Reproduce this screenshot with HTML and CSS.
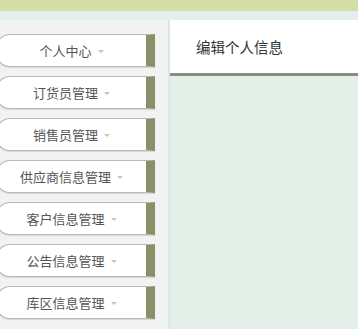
FILE: index.html
```html
<!DOCTYPE html>
<html>
  <head>
    <title>编辑个人信息</title>
    <link rel="stylesheet" href="styles.css">
  </head>
  <body>
    <div class="top-bar"></div>
    <div class="top-strip"></div>
    <div class="main-box">
      <div class="side-menu">
        <div class="menu-button">个人中心<span class="caret"></span></div>
        <div class="menu-button">订货员管理<span class="caret"></span></div>
        <div class="menu-button">销售员管理<span class="caret"></span></div>
        <div class="menu-button">供应商信息管理<span class="caret"></span></div>
        <div class="menu-button">客户信息管理<span class="caret"></span></div>
        <div class="menu-button">公告信息管理<span class="caret"></span></div>
        <div class="menu-button">库区信息管理<span class="caret"></span></div>
      </div>
      <div class="content-box">
        <div class="content-title">编辑个人信息</div>
        <div class="content-body"></div>
      </div>
    </div>
  </body>
</html>
```
FILE: styles.css
```css
body {
  margin: 0;
  background-color: #e3eeee;
  font-family: "Microsoft YaHei", "Noto Sans CJK SC", sans-serif;
  overflow: hidden;
  height: 329px;
}

.top-bar {
  height: 11px;
  background-color: #d3dfa6;
}

.top-strip {
  height: 9px;
  background-color: #e3eeee;
}

.main-box {
  display: flex;
  height: 309px;
}

/* left menu column */
.side-menu {
  width: 168px;
  background-color: #f1f2f2;
  padding-top: 14px;
  box-sizing: border-box;
}

.menu-button {
  display: flex;
  justify-content: center;
  align-items: center;
  height: 33px;
  width: 159px;
  margin-left: -4px;
  margin-bottom: 9px;
  box-sizing: border-box;
  background-color: #ffffff;
  border: 1px solid #b9b9b5;
  border-right: 9px solid #8b8e67;
  border-radius: 14px 0 0 14px;
  box-shadow: 0 1px 1px rgba(0, 0, 0, 0.12);
  font-size: 13px;
  color: #555555;
}

.caret {
  display: inline-block;
  margin-left: 6px;
  margin-top: 1px;
  border-left: 3px solid transparent;
  border-right: 3px solid transparent;
  border-top: 3px solid #c4c4c4;
}

/* right panel */
.content-box {
  flex: 1;
  display: flex;
  flex-direction: column;
  border-left: 2px solid #dae7e7;
}

.content-title {
  height: 53px;
  background-color: #ffffff;
  padding-left: 26px;
  display: flex;
  align-items: center;
  font-size: 14.5px;
  color: #333333;
  border-bottom: 3px solid #8b8f7a;
}

.content-body {
  flex: 1;
  background-color: #e4efe9;
}
```
